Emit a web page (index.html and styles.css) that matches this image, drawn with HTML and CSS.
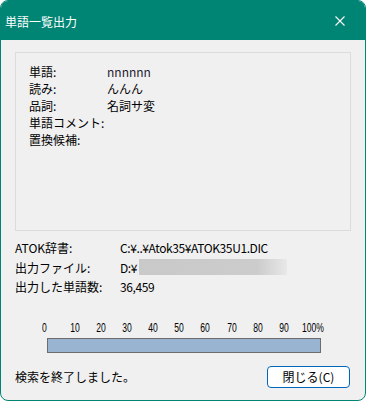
FILE: index.html
```html
<!DOCTYPE html>
<html lang="ja">
<head>
    <meta charset="UTF-8">
    <title>単語一覧出力</title>
    <link rel="stylesheet" href="styles.css">
</head>
<body>
    <div class="window">
        <div class="titlebar">
            <span class="title">単語一覧出力</span>
            <svg class="close" width="10" height="10" viewBox="0 0 10 10">
                <path d="M0.5 0.5 L9.5 9.5 M9.5 0.5 L0.5 9.5" stroke="#fff" stroke-width="1.1" fill="none"/>
            </svg>
        </div>
        <div class="content">
            <div class="group">
                <div class="word-grid">
                    <span>単語:</span><span class="word">nnnnnn</span>
                    <span>読み:</span><span>んんん</span>
                    <span>品詞:</span><span>名詞サ変</span>
                    <span>単語コメント:</span><span></span>
                    <span>置換候補:</span><span></span>
                </div>
            </div>

            <div class="info-grid">
                <span>ATOK辞書:</span><span class="val">C:¥..¥Atok35¥ATOK35U1.DIC</span>
                <span>出力ファイル:</span><span class="val path">D:¥<i class="blur"></i></span>
                <span>出力した単語数:</span><span class="val">36,459</span>
            </div>

            <div class="scale">
                <span class="zero">0</span>
                <span>10</span><span>20</span><span>30</span><span>40</span><span>50</span>
                <span>60</span><span>70</span><span>80</span><span>90</span>
                <span class="full">100%</span>
            </div>
            <div class="bar"></div>

            <div class="status-row">
                <span>検索を終了しました。</span>
                <button class="close-btn">閉じる(C)</button>
            </div>
        </div>
    </div>
</body>
</html>
```

FILE: styles.css
```css
* {
    box-sizing: border-box;
}

body {
    margin: 0;
    background-color: #fff;
    font-family: "Noto Sans CJK JP", "Liberation Sans", sans-serif;
    font-size: 12px;
    color: #000;
}

.window {
    width: 366px;
    height: 401px;
    border: 1px solid #008575;
    border-radius: 8px;
    background-color: #f0f0f0;
    overflow: hidden;
}

.titlebar {
    height: 39px;
    background-color: #008575;
    display: flex;
    align-items: center;
    justify-content: space-between;
    padding: 1px 20px 0 4px;
    color: #fff;
}

.title {
    font-size: 12px;
}

.content {
    padding: 12px 14px 0 14px;
}

/* 上の枠 */
.group {
    width: 336px;
    height: 179px;
    border: 1px solid #dcdcdc;
    padding: 10px 0 0 13px;
}

.word-grid {
    display: grid;
    grid-template-columns: 78px 1fr;
    line-height: 17px;
}

.word {
    color: #1e1a30;
}

.info-grid {
    display: grid;
    grid-template-columns: 105px 1fr;
    line-height: 19.5px;
    margin-top: 7px;
}

.val {
    letter-spacing: -0.4px;
}

.path {
    display: flex;
    align-items: center;
}

.blur {
    display: inline-block;
    width: 148px;
    height: 16px;
    margin-left: 2px;
    background: linear-gradient(to right, #c9c9c9, #cccccc 80%, #e8e8e8);
}

.scale {
    display: flex;
    margin: 24px 0 3px 27px;
    height: 14px;
    line-height: 14px;
    font-family: "Liberation Sans", sans-serif;
    font-size: 13px;
}

.scale span {
    display: inline-block;
    width: 26.2px;
    text-align: center;
    transform: scaleX(0.66);
}

.scale .zero {
    width: 19.5px;
    text-align: left;
    transform-origin: left center;
}

.scale .full {
    width: auto;
    margin-left: 5px;
    transform-origin: left center;
}

.bar {
    margin-left: 32px;
    width: 274px;
    height: 15px;
    border: 1px solid #6d6d6d;
    background-color: #98b4d0;
}

.status-row {
    display: flex;
    align-items: center;
    justify-content: space-between;
    margin-top: 13px;
    padding-right: 1px;
}

.close-btn {
    width: 83px;
    height: 22px;
    border: 1px solid #0067c0;
    border-radius: 4px;
    background-color: #fff;
    font-family: inherit;
    font-size: 12px;
    padding: 0;
    color: #000;
}
```
